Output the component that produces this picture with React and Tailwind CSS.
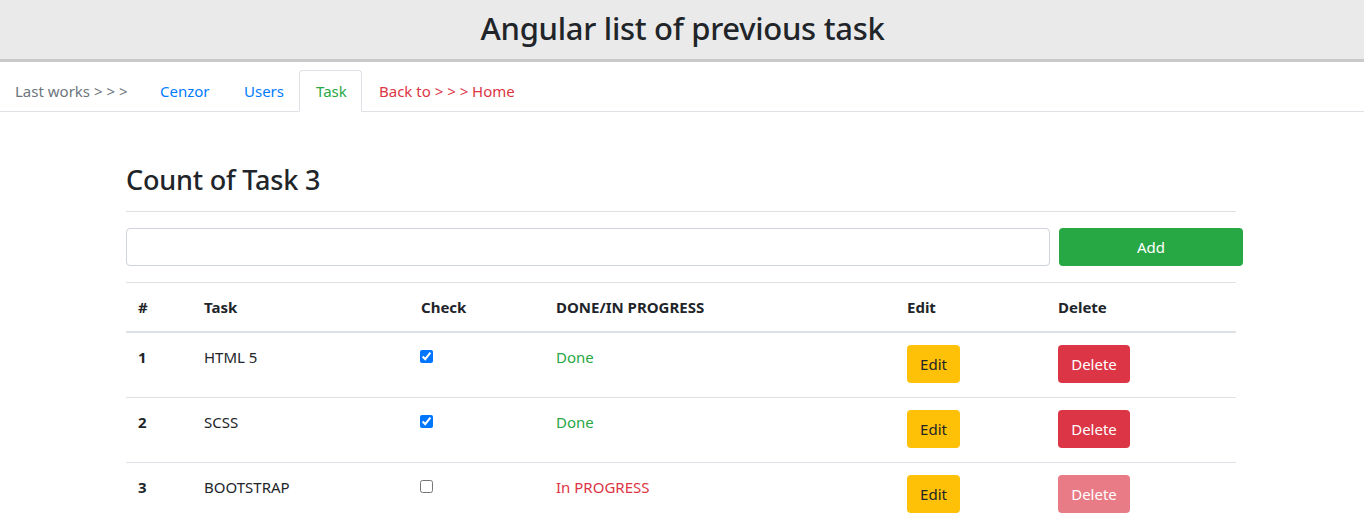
import React from "react";

const rows = [
  { n: 1, task: "HTML 5", done: true },
  { n: 2, task: "SCSS", done: true },
  { n: 3, task: "BOOTSTRAP", done: false },
];

const cols = "grid grid-cols-[66px_217px_135px_351px_151px_1fr]";

export default function App() {
  return (
    <div className="min-h-[531px] bg-white text-[#212529] text-[16px] leading-6" style={{ fontFamily: '"Noto Sans", "Open Sans", sans-serif' }}>
      <header className="h-[62px] bg-[#eaeaea] border-b-[3px] border-[#c9c9c9] flex items-center justify-center">
        <h1 className="text-[31px] font-medium leading-[38px] -mt-[4px] tracking-[-0.3px] pl-[1px]">Angular list of previous task</h1>
      </header>

      <nav className="mt-[8px] flex border-b border-[#dee2e6] h-[42px]">
        <div className="w-[144px] pl-[15px] pt-[9px] text-[#6c757d] text-[15px]">Last works &gt; &gt; &gt;</div>
        <div className="w-[84px] pl-[16px] pt-[9px] text-[#007bff] text-[15px]">Cenzor</div>
        <div className="w-[71px] pl-[16px] pt-[9px] text-[#007bff] text-[15px]">Users</div>
        <div className="w-[63px] pl-[16px] pt-[8px] text-[#28a745] text-[15px] bg-white border border-[#dee2e6] border-b-white rounded-t-[4px] h-[42px]">Task</div>
        <div className="pl-[17px] pt-[9px] text-[#dc3545] text-[15px]">Back to &gt; &gt; &gt; Home</div>
      </nav>

      <main className="w-[1110px] ml-[126px]">
        <h3 className="mt-[51px] text-[27px] font-medium leading-[34px] tracking-[-0.2px]">Count of Task 3</h3>
        <div className="mt-[14px] border-t border-[#dee2e6]" />
        <div className="mt-[16px] flex gap-[9px]">
          <input className="shrink-0 w-[924px] h-[38px] border border-[#ced4da] rounded-[4px] px-3 outline-none" />
          <button className="shrink-0 w-[184px] h-[38px] rounded-[4px] bg-[#28a745] text-white text-[15px]">Add</button>
        </div>

        <div className="mt-[16px] border-t border-[#dee2e6]">
          <div className={`${cols} border-b-2 border-[#dee2e6] font-bold text-[15px]`}>
            {["#", "Task", "Check", "DONE/IN PROGRESS", "Edit", "Delete"].map((h) => (
              <div key={h} className="p-3 h-[48px]">{h}</div>
            ))}
          </div>
          {rows.map((r, i) => (
            <div key={r.n} className={`${cols} ${i < rows.length - 1 ? "border-b border-[#dee2e6]" : ""} h-[65px] text-[15px]`}>
              <div className="px-3 pt-3 font-bold">{r.n}</div>
              <div className="px-3 pt-3">{r.task}</div>
              <div className="px-3 pt-[17px]">
                <input type="checkbox" readOnly checked={r.done} className="w-[13px] h-[13px] m-0 block ml-[-1px]" />
              </div>
              <div className={`px-3 pt-3 ${r.done ? "text-[#28a745]" : "text-[#dc3545]"}`}>
                {r.done ? "Done" : "In PROGRESS"}
              </div>
              <div className="px-3 pt-3">
                <button className="w-[53px] h-[38px] rounded-[4px] bg-[#ffc107] text-[#212529] text-[15px]">Edit</button>
              </div>
              <div className="px-3 pt-3">
                <button className={`w-[72px] h-[38px] rounded-[4px] bg-[#dc3545] text-white text-[15px] ${r.done ? "" : "opacity-65"}`}>Delete</button>
              </div>
            </div>
          ))}
        </div>
      </main>
    </div>
  );
}
